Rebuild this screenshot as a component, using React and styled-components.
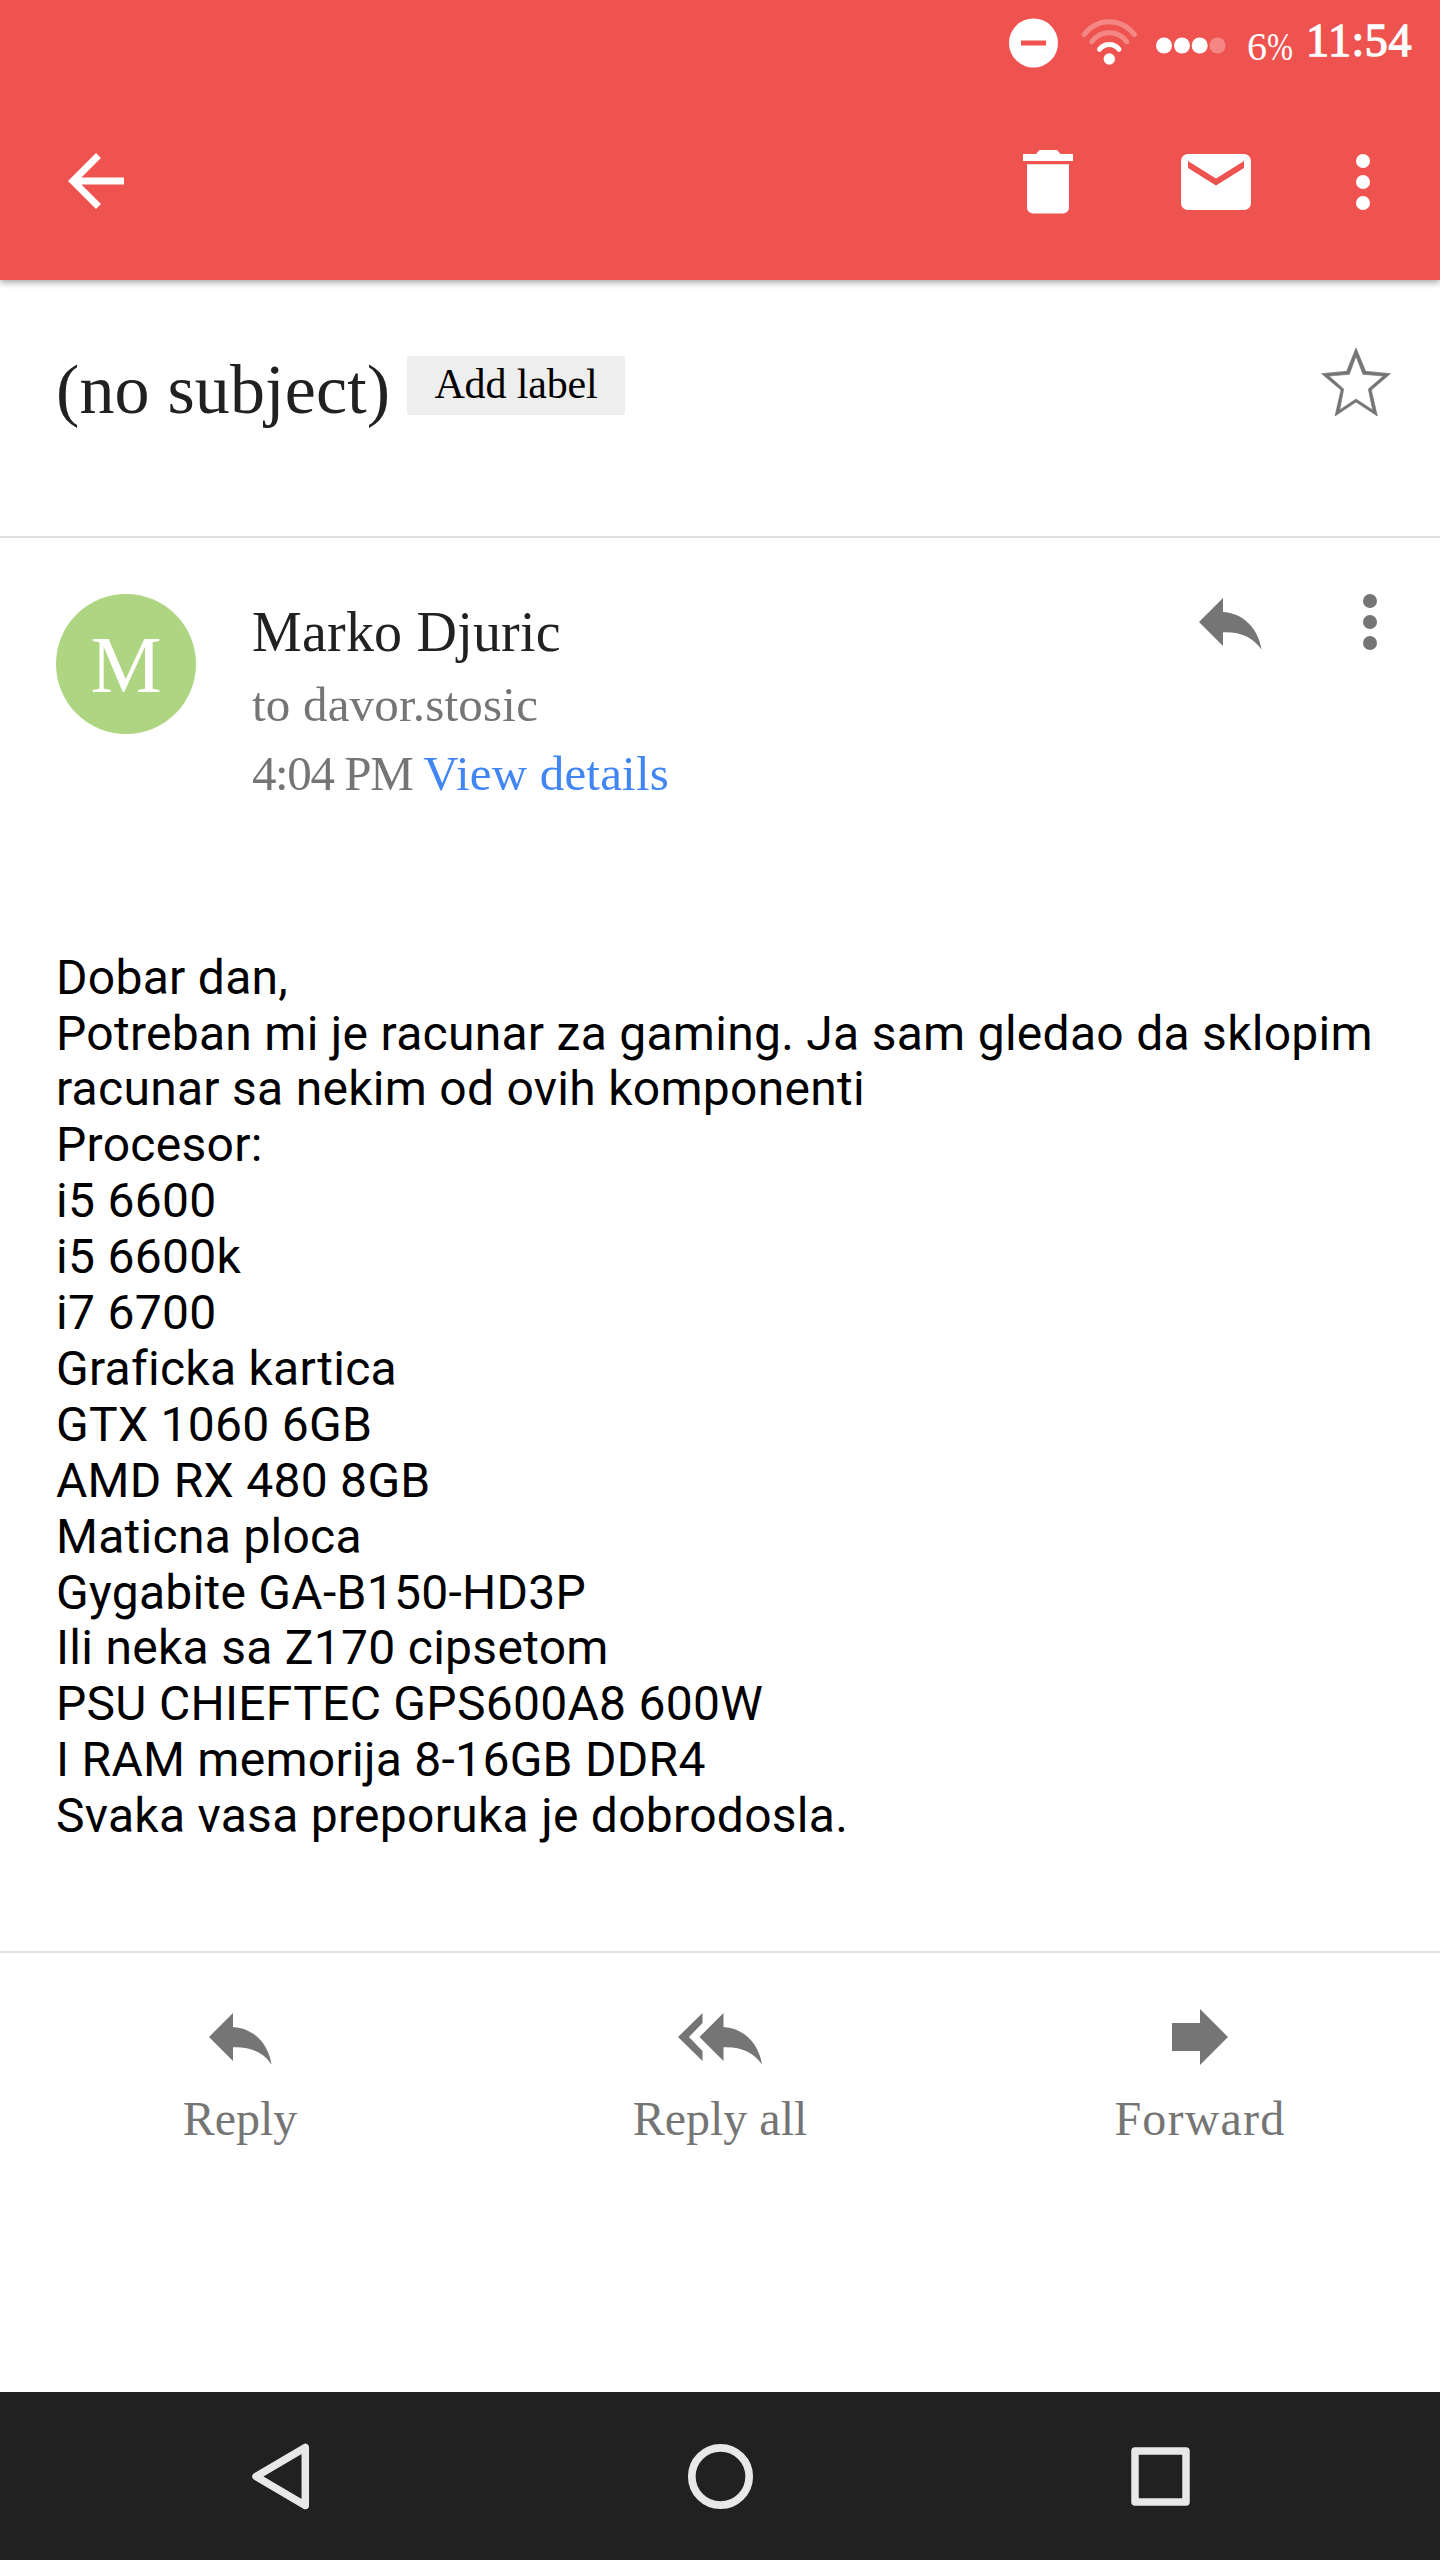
import styled, { createGlobalStyle } from 'styled-components';

const message = [
  'Dobar dan,',
  'Potreban mi je racunar za gaming. Ja sam gledao da sklopim',
  'racunar sa nekim od ovih komponenti',
  'Procesor:',
  'i5 6600',
  'i5 6600k',
  'i7 6700',
  'Graficka kartica',
  'GTX 1060 6GB',
  'AMD RX 480 8GB',
  'Maticna ploca',
  'Gygabite GA-B150-HD3P',
  'Ili neka sa Z170 cipsetom',
  'PSU CHIEFTEC GPS600A8 600W',
  'I RAM memorija 8-16GB DDR4',
  'Svaka vasa preporuka je dobrodosla.',
];

const DndIcon = () => (
  <svg width="50" height="50" viewBox="0 0 50 50">
    <path fillRule="evenodd" fill="#fff" d="M25.500 .5a24.500 24.500 0 1 0 0 49a24.500 24.500 0 1 0 0-49zM13 22.500h25v5h-25z" />
  </svg>
);

const WifiIcon = () => (
  <svg width="56" height="50" viewBox="0 0 56 50" fill="none" stroke="#fff" strokeWidth="5" strokeLinecap="round">
    <path d="M3.200 16.500C16.500 -.5 40 -.5 53.300 16.500" opacity=".3" />
    <path d="M10.800 23.700C19.500 11.800 37 11.800 45.700 23.700" opacity=".3" />
    <path d="M18.500 31.300C23.500 24.800 33 24.800 38 31.300" />
    <circle cx="28.300" cy="41" r="5.700" fill="#fff" stroke="none" />
  </svg>
);

const SignalIcon = () => (
  <svg width="70" height="50" viewBox="0 0 70 50" fill="#fff">
    <circle cx="8" cy="27.500" r="8" />
    <circle cx="26" cy="27.500" r="8" />
    <circle cx="43.700" cy="27.500" r="8" />
    <circle cx="61.500" cy="27.500" r="8" opacity=".3" />
  </svg>
);

const BackIcon = () => (
  <svg width="84" height="84" viewBox="0 0 24 24" fill="#fff">
    <path d="M20 11H7.830l5.590-5.590L12 4l-8 8 8 8 1.410-1.410L7.830 13H20v-2z" />
  </svg>
);

const DeleteIcon = () => (
  <svg width="84" height="84" viewBox="0 0 84 84" fill="#fff">
    <path d="M17 14H30L33.500 10H51L54.500 14H67V21H17zM21 24.300H63V67.500a6 6 0 0 1-6 6H27a6 6 0 0 1-6-6z" />
  </svg>
);

const MailIcon = () => (
  <svg width="84" height="84" viewBox="0 0 84 84">
    <path fill="#fff" fillRule="evenodd" d="M14 14H70a7 7 0 0 1 7 7V63a7 7 0 0 1-7 7H14a7 7 0 0 1-7-7V21a7 7 0 0 1 7-7zM14 21V28L42 45.500L70 28V21L42 38.500z" />
  </svg>
);

const MoreIcon = ({ color }) => (
  <svg width="84" height="84" viewBox="0 0 84 84" fill={color}>
    <circle cx="42" cy="21" r="7" />
    <circle cx="42" cy="42" r="7" />
    <circle cx="42" cy="63" r="7" />
  </svg>
);

const StarIcon = () => (
  <svg width="70" height="70" viewBox="543 82 210 210">
    <path
      fill="#757575"
      stroke="#757575"
      strokeWidth="2"
      fillRule="evenodd"
      d="M648 85L677 155L751 162L694 211L712 289L648 247L585 289L603 211L545 162L620 155zM648 110L628 164L567 169L611 208L599 271L648 238L698 271L685 208L730 169L669 164z"
    />
  </svg>
);

const ReplyIcon = () => (
  <svg width="84" height="84" viewBox="0 0 84 84" fill="#757575">
    <path d="M11 42L35 18V32C54 33 70 47 73.500 69.500C65 57 52 51.500 35 52.300V66z" />
  </svg>
);

const ReplyAllIcon = () => (
  <svg width="84" height="84" viewBox="0 0 84 84" fill="#757575">
    <path d="M0 42L24.500 18V28L11 42L24.500 56V66zM21.500 42L45.500 18V32C64.500 33 80.500 47 84 69.500C75.500 57 62.500 51.500 45.500 52.300V66z" />
  </svg>
);

const ForwardIcon = () => (
  <svg width="84" height="84" viewBox="0 0 84 84" fill="#757575">
    <path d="M14 28H42V14L70 42L42 70V56H14z" />
  </svg>
);

function App() {
  return (
    <Screen>
      <GlobalStyle />
      <Header>
        <StatusBar>
          <DndIcon />
          <WifiIcon />
          <SignalIcon />
          <Battery>6<Percent>%</Percent></Battery>
          <Clock>11:54</Clock>
        </StatusBar>
        <Toolbar>
          <BackButton><BackIcon /></BackButton>
          <ToolbarButton $gap={84}><DeleteIcon /></ToolbarButton>
          <ToolbarButton $gap={63}><MailIcon /></ToolbarButton>
          <ToolbarButton><MoreIcon color="#fff" /></ToolbarButton>
        </Toolbar>
      </Header>
      <SubjectRow>
        <Subject>(no subject)</Subject>
        <Label>Add label</Label>
        <StarButton><StarIcon /></StarButton>
      </SubjectRow>
      <Sender>
        <Avatar>M</Avatar>
        <SenderInfo>
          <Name>Marko Djuric</Name>
          <Detail>to davor.stosic</Detail>
          <Detail>
            <Time>4:04 PM </Time>
            <Link>View details</Link>
          </Detail>
        </SenderInfo>
        <SenderActions>
          <ReplyIcon />
          <MoreIcon color="#757575" />
        </SenderActions>
      </Sender>
      <Body>
        {message.map(line => (
          <Line key={line}>{line}</Line>
        ))}
      </Body>
      <Actions>
        <Action><ReplyIcon /><ActionText>Reply</ActionText></Action>
        <Action><ReplyAllIcon /><ActionText>Reply all</ActionText></Action>
        <Action><ForwardIcon /><ActionText $spacing={1.2}>Forward</ActionText></Action>
      </Actions>
      <NavBar>
        <svg width="84" height="84" viewBox="0 0 84 84" fill="none" stroke="#e8e8e8" strokeWidth="7.500" strokeLinejoin="round">
          <path d="M18 42.500L67.300 13.500V71.500z" />
        </svg>
        <svg width="84" height="84" viewBox="0 0 84 84" fill="none" stroke="#e8e8e8" strokeWidth="7.700">
          <circle cx="42.500" cy="42.500" r="28.700" />
        </svg>
        <svg width="84" height="84" viewBox="0 0 84 84" fill="none" stroke="#e8e8e8" strokeWidth="7.500" strokeLinejoin="round">
          <path d="M17 17H68V68H17z" />
        </svg>
      </NavBar>
    </Screen>
  );
}

const GlobalStyle = createGlobalStyle`
  body {
    margin: 0;
    background: #fff;
  }

  svg {
    display: block;
    flex: none;
  }
`;

const Screen = styled.div`
  width: 1440px;
  height: 2560px;
  display: flex;
  flex-direction: column;
  background: #fff;
  color: #212121;
  font-family: 'Liberation Serif', serif;
  overflow: hidden;
  white-space: nowrap;
`;

const Header = styled.header`
  height: 280px;
  flex: none;
  background: #ef5350;
  color: #fff;
  box-shadow: 0 2px 7px rgba(0, 0, 0, 0.4);
`;

const StatusBar = styled.div`
  height: 85px;
  display: flex;
  align-items: center;
  padding-left: 1008px;

  svg {
    margin-right: 23px;
  }

  svg + svg + svg {
    margin-right: 21px;
    margin-left: -4px;
  }
`;

const Battery = styled.div`
  width: 59px;
  padding-top: 8px;
  font-size: 40px;
  line-height: 48px;
`;

const Percent = styled.span`
  display: inline-block;
  transform: scaleX(0.78);
  transform-origin: left;
`;

const Clock = styled.div`
  padding-bottom: 3px;
  font-size: 46px;
  letter-spacing: 0.6px;
  line-height: 50px;
  -webkit-text-stroke: 1.3px #fff;
`;

const Toolbar = styled.div`
  height: 195px;
  display: flex;
  align-items: center;
  padding: 0 35px 1px 54px;
  box-sizing: border-box;
`;

const BackButton = styled.div`
  margin-right: auto;
  padding-bottom: 3px;
`;

const ToolbarButton = styled.div`
  margin-right: ${({ $gap }) => $gap || 0}px;
`;

const SubjectRow = styled.div`
  height: 258px;
  flex: none;
  box-sizing: border-box;
  padding: 69px 49px 0 56px;
  display: flex;
  align-items: flex-start;
  border-bottom: 2px solid #e0e0e0;
`;

const Subject = styled.div`
  width: 351px;
  padding-top: 1px;
  font-size: 70px;
  letter-spacing: 0.15px;
  line-height: 80px;
`;

const Label = styled.div`
  width: 218px;
  height: 59px;
  margin-top: 7px;
  border-radius: 3px;
  background: #eee;
  color: #000;
  font-size: 42px;
  letter-spacing: -0.15px;
  line-height: 57px;
  text-align: center;
`;

const StarButton = styled.div`
  margin-left: auto;
  margin-top: -2px;
`;

const Sender = styled.div`
  height: 411px;
  flex: none;
  box-sizing: border-box;
  display: flex;
  align-items: flex-start;
  padding: 56px 28px 0 56px;
`;

const Avatar = styled.div`
  width: 140px;
  height: 140px;
  flex: none;
  border-radius: 50%;
  background: #aed581;
  color: #fff;
  font-size: 80px;
  line-height: 143px;
  text-align: center;
`;

const SenderInfo = styled.div`
  margin: 4px 0 0 56px;
  flex: 1;
`;

const Name = styled.div`
  margin-bottom: 4px;
  font-size: 56px;
  letter-spacing: 0.2px;
  line-height: 68px;
`;

const Detail = styled.div`
  color: #757575;
  font-size: 49px;
  letter-spacing: 0.2px;
  line-height: 69px;
`;

const Time = styled.span`
  letter-spacing: -1.4px;
`;

const Link = styled.span`
  color: #4285f4;
  letter-spacing: 0.2px;
`;

const SenderActions = styled.div`
  display: flex;
  gap: 56px;
  margin-top: -14px;
`;

const Body = styled.div`
  height: 1004px;
  flex: none;
  box-sizing: border-box;
  padding: 0.6px 0 0 56px;
  border-bottom: 2px solid #e0e0e0;
  color: #000;
  font-family: Roboto, sans-serif;
`;

const Line = styled.div`
  font-size: 48px;
  letter-spacing: 0.28px;
  line-height: 55.9px;
`;

const Actions = styled.div`
  display: flex;
  padding-top: 42px;
`;

const Action = styled.div`
  flex: 1;
  display: flex;
  flex-direction: column;
  align-items: center;
  gap: 10px;
`;

const ActionText = styled.div`
  color: #757575;
  font-size: 48px;
  letter-spacing: ${({ $spacing }) => $spacing || 0}px;
  line-height: 60px;
`;

const NavBar = styled.nav`
  height: 168px;
  flex: none;
  box-sizing: border-box;
  margin-top: auto;
  padding: 0 238px;
  display: flex;
  align-items: center;
  justify-content: space-between;
  background: #212121;
`;

export default App;
